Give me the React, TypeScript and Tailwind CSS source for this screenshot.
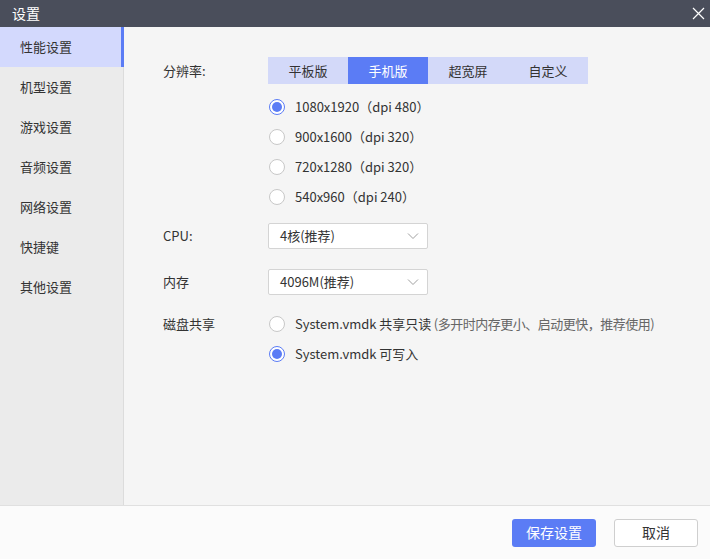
import { useState } from "react";

const font = { fontFamily: '"Microsoft YaHei", "Noto Sans CJK SC", sans-serif' };

const menu = ["性能设置", "机型设置", "游戏设置", "音频设置", "网络设置", "快捷键", "其他设置"];
const tabs = ["平板版", "手机版", "超宽屏", "自定义"];
const resolutions = ["1080x1920（dpi 480）", "900x1600（dpi 320）", "720x1280（dpi 320）", "540x960（dpi 240）"];

function Radio({ checked, children, onClick }: { checked: boolean; children: React.ReactNode; onClick?: () => void }) {
  return (
    <div onClick={onClick} className="flex items-center h-[30px] cursor-pointer">
      <span className={`w-[16px] h-[16px] rounded-full border flex items-center justify-center bg-white ${checked ? "border-[#5b7cf5]" : "border-[#c8c8c8]"}`}>
        {checked && <span className="w-[10px] h-[10px] rounded-full bg-[#5b7cf5]" />}
      </span>
      <span className="ml-[10px] text-[13px] text-[#333]">{children}</span>
    </div>
  );
}

function Select({ value }: { value: string }) {
  return (
    <div className="w-[160px] h-[26px] bg-white border border-[#d4d4d4] rounded-[2px] flex items-center justify-between pl-[11px] pr-[8px] text-[13px] text-[#333]">
      <span>{value}</span>
      <svg width="12" height="8" viewBox="0 0 12 8" fill="none"><path d="M1 1.5l5 5 5-5" stroke="#a0a0a0" strokeWidth="1" /></svg>
    </div>
  );
}

export default function App() {
  const [active, setActive] = useState(0);
  const [tab, setTab] = useState(1);
  const [res, setRes] = useState(0);
  const [disk, setDisk] = useState(1);

  return (
    <div style={font} className="w-[710px] h-[559px] flex flex-col bg-[#f5f5f5] overflow-hidden">
      <div className="h-[27px] bg-[#4a4e5b] flex items-center justify-between pl-[12px] pr-[5px] shrink-0">
        <span className="text-white text-[14px]">设置</span>
        <svg width="13" height="13" viewBox="0 0 13 13"><path d="M1 1l11 11M12 1L1 12" stroke="#fff" strokeWidth="1.2" /></svg>
      </div>

      <div className="flex flex-1 min-h-0">
        <div className="w-[124px] bg-[#ebebeb] border-r border-[#dcdcdc] flex flex-col shrink-0">
          {menu.map((m, i) => (
            <div
              key={m}
              onClick={() => setActive(i)}
              className={`h-[40px] flex items-center pl-[20px] text-[13px] text-[#333] cursor-pointer ${i === active ? "bg-[#d3d9fd] border-r-[3px] border-[#5b7cf5] -mr-px" : ""}`}
            >
              {m}
            </div>
          ))}
        </div>

        <div className="flex-1 pl-[39px] pt-[30px]">
          <div className="flex items-start">
            <div className="w-[105px] h-[27px] flex items-center text-[13px] text-[#333]">分辨率:</div>
            <div>
              <div className="flex">
                {tabs.map((t, i) => (
                  <div
                    key={t}
                    onClick={() => setTab(i)}
                    className={`w-[80px] h-[27px] flex items-center justify-center text-[13px] cursor-pointer ${i === tab ? "bg-[#5b7cf5] text-white" : "bg-[#d3d9f9] text-[#333]"}`}
                  >
                    {t}
                  </div>
                ))}
              </div>
              <div className="mt-[8px] pl-[1px]">
                {resolutions.map((r, i) => (
                  <Radio key={r} checked={res === i} onClick={() => setRes(i)}>{r}</Radio>
                ))}
              </div>
            </div>
          </div>

          <div className="flex items-center mt-[11px]">
            <div className="w-[105px] text-[13px] text-[#333]">CPU:</div>
            <Select value="4核(推荐)" />
          </div>

          <div className="flex items-center mt-[20px]">
            <div className="w-[105px] text-[13px] text-[#333]">内存</div>
            <Select value="4096M(推荐)" />
          </div>

          <div className="flex items-start mt-[14px]">
            <div className="w-[105px] h-[30px] flex items-center text-[13px] text-[#333]">磁盘共享</div>
            <div className="pl-[1px]">
              <Radio checked={disk === 0} onClick={() => setDisk(0)}>
                System.vmdk 共享只读<span className="text-[#666] tracking-[-0.5px]"> (多开时内存更小、启动更快，推荐使用)</span>
              </Radio>
              <Radio checked={disk === 1} onClick={() => setDisk(1)}>System.vmdk 可写入</Radio>
            </div>
          </div>
        </div>
      </div>

      <div className="h-[54px] shrink-0 bg-[#fbfbfb] border-t border-[#e0e0e0] flex items-center justify-end pr-[12px] gap-[18px]">
        <button className="w-[84px] h-[28px] rounded-[3px] bg-[#5b7cf5] text-white text-[14px]">保存设置</button>
        <button className="w-[84px] h-[28px] rounded-[3px] bg-white border border-[#cfcfcf] text-[#333] text-[14px]">取消</button>
      </div>
    </div>
  );
}
